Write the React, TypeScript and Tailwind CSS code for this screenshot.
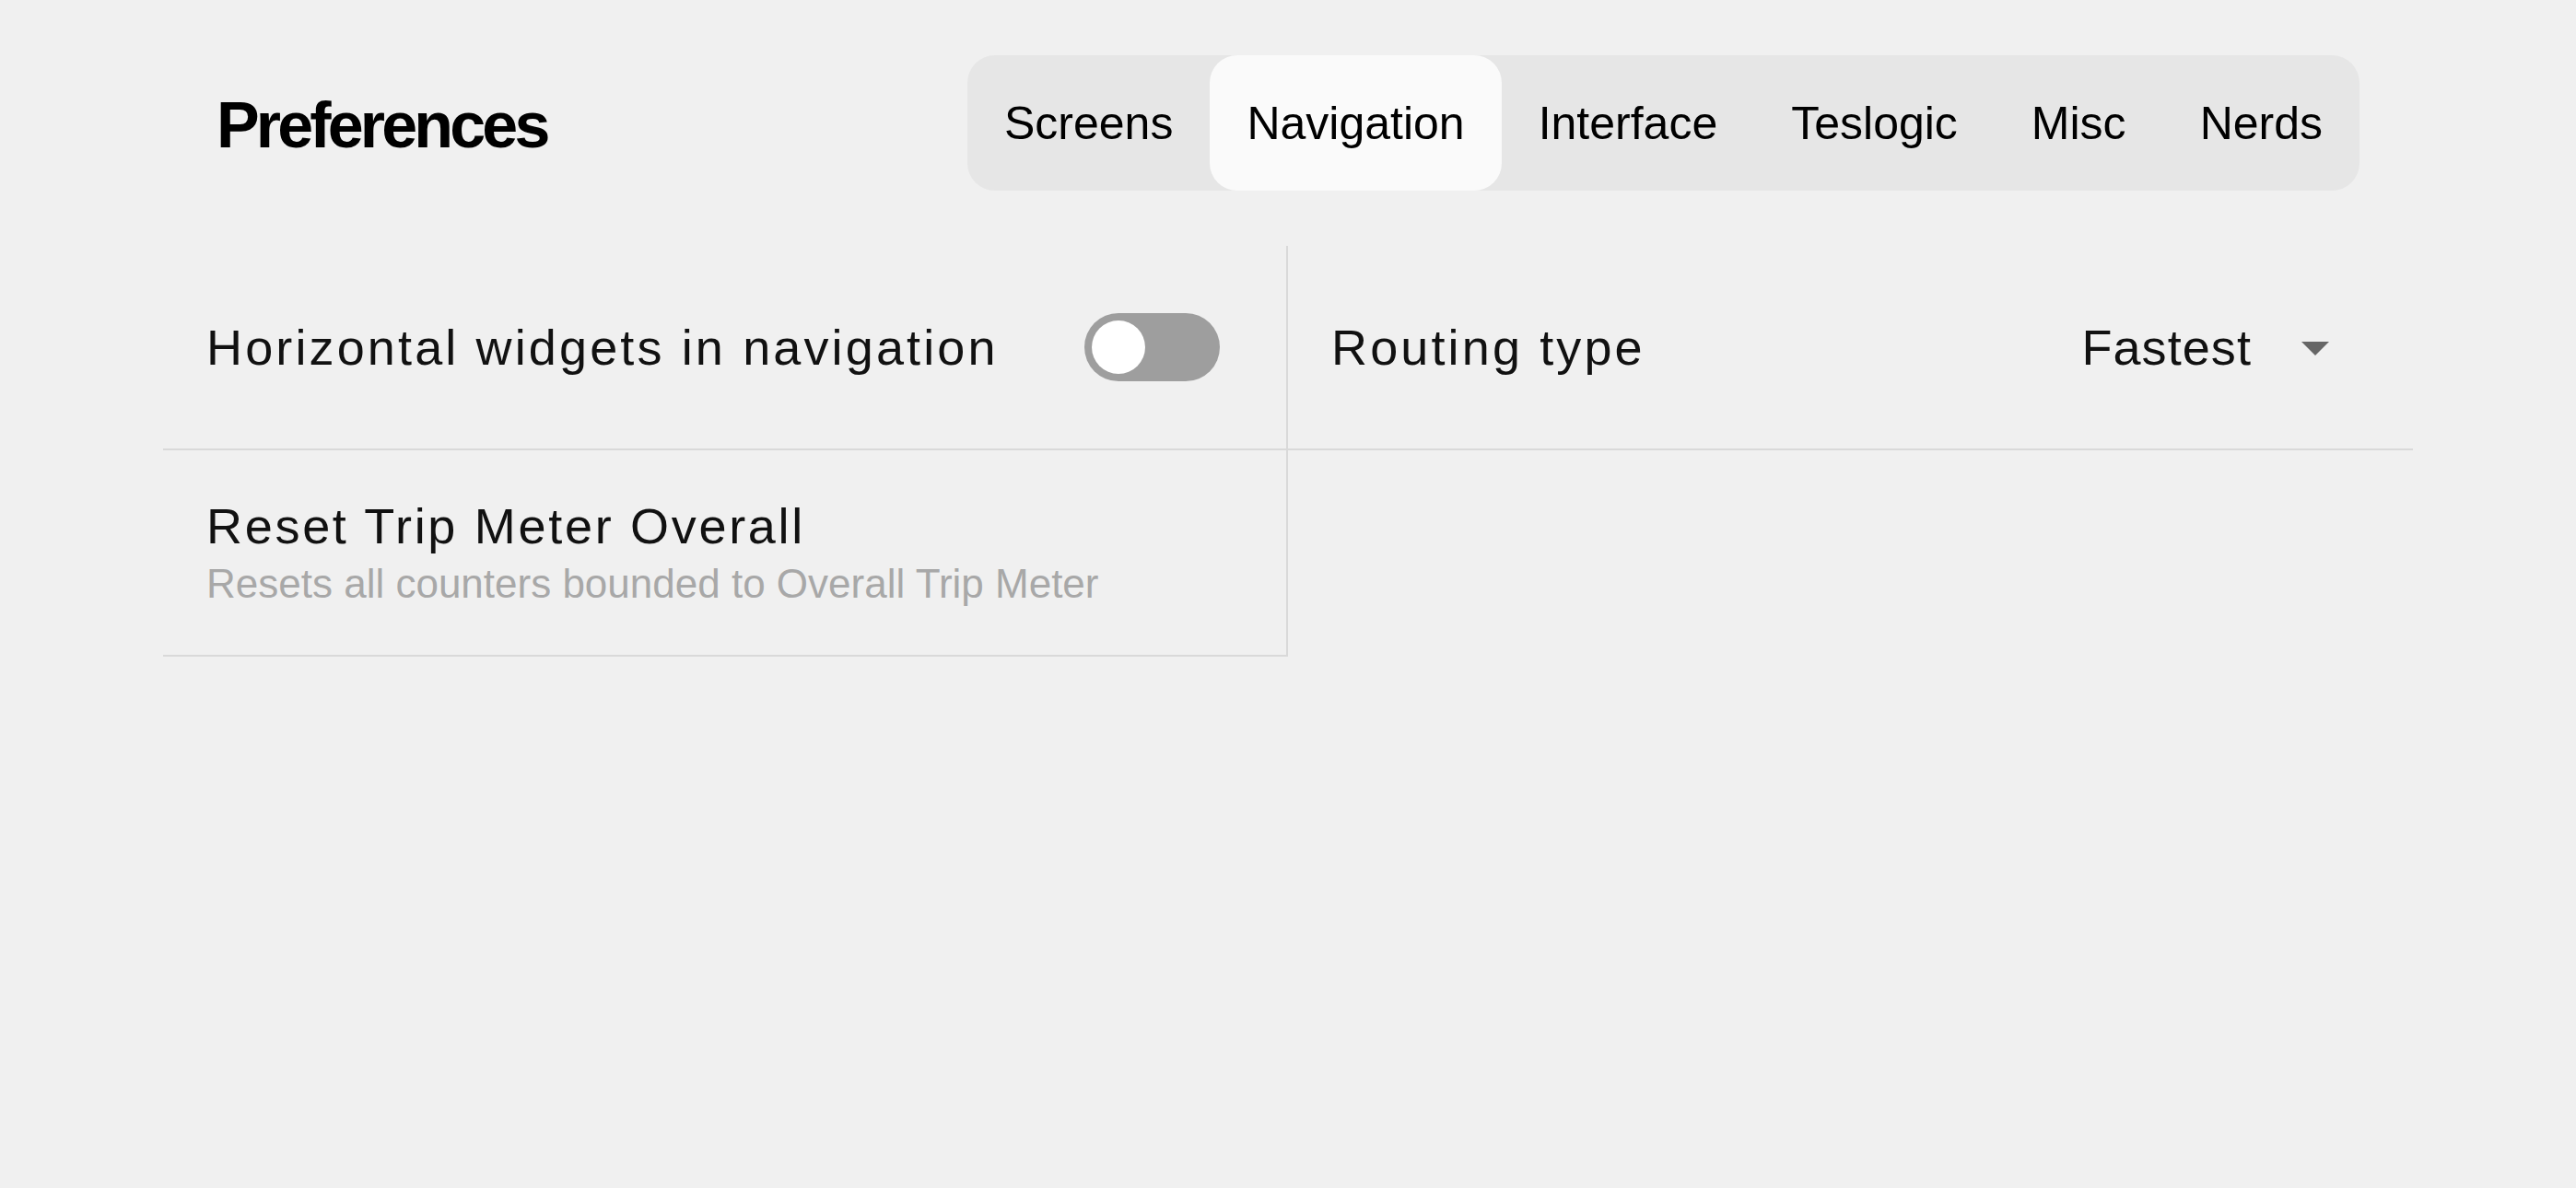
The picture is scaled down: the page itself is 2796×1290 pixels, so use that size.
import { useState } from 'react'

const tabs = ['Screens', 'Navigation', 'Interface', 'Teslogic', 'Misc', 'Nerds']

function Toggle({ on }: { on: boolean }) {
  return (
    <div className={`h-[74px] w-[147px] shrink-0 rounded-full p-[8px] ${on ? 'bg-[#3e6ae1]' : 'bg-[#9e9e9e]'}`}>
      <div className={`h-[58px] w-[58px] rounded-full bg-white ${on ? 'ml-auto' : ''}`} />
    </div>
  )
}

export default function App() {
  const [active, setActive] = useState('Navigation')

  return (
    <div className="min-h-screen w-full bg-[#f0f0f0] px-[177px] pt-[60px] font-['Liberation_Sans',Arial,sans-serif] text-[#111]">
      {/* header */}
      <div className="flex items-center justify-between px-[58px]">
        <h1 className="mt-[4px] text-[70px] font-bold leading-none tracking-[-0.055em] text-black">Preferences</h1>
        <div className="flex h-[147px] rounded-[30px] bg-[#e6e6e6]">
          {tabs.map(t => (
            <button
              key={t}
              onClick={() => setActive(t)}
              className={`flex items-center rounded-[30px] px-[40px] text-[50px] leading-none text-black ${
                active === t ? 'bg-[#fafafa]' : ''
              }`}
            >
              {t}
            </button>
          ))}
        </div>
      </div>

      {/* settings grid */}
      <div className="mt-[60px] grid grid-cols-2">
        <div className="flex h-[222px] items-center justify-between border-r-2 border-b-2 border-[#d9d9d9] pl-[47px] pr-[72px]">
          <span className="text-[54px] leading-none tracking-[0.058em]">Horizontal widgets in navigation</span>
          <Toggle on={false} />
        </div>
        <div className="flex h-[222px] items-center justify-between border-b-2 border-[#d9d9d9] pl-[47px] pr-[91px]">
          <span className="text-[54px] leading-none tracking-[0.058em]">Routing type</span>
          <div className="flex items-center gap-[54px]">
            <span className="text-[54px] leading-none tracking-[0.02em]">Fastest</span>
            <svg width="30" height="15" viewBox="0 0 30 15" className="mt-[2px]">
              <polygon points="0,0 30,0 15,15" fill="#666666" />
            </svg>
          </div>
        </div>
        <div className="flex h-[224px] flex-col justify-center border-r-2 border-b-2 border-[#d9d9d9] pl-[47px]">
          <span className="text-[54px] leading-[60px] tracking-[0.05em]">Reset Trip Meter Overall</span>
          <span className="mt-[8px] text-[44px] leading-[50px] text-[#a8a8a8]">Resets all counters bounded to Overall Trip Meter</span>
        </div>
        <div />
      </div>
    </div>
  )
}
